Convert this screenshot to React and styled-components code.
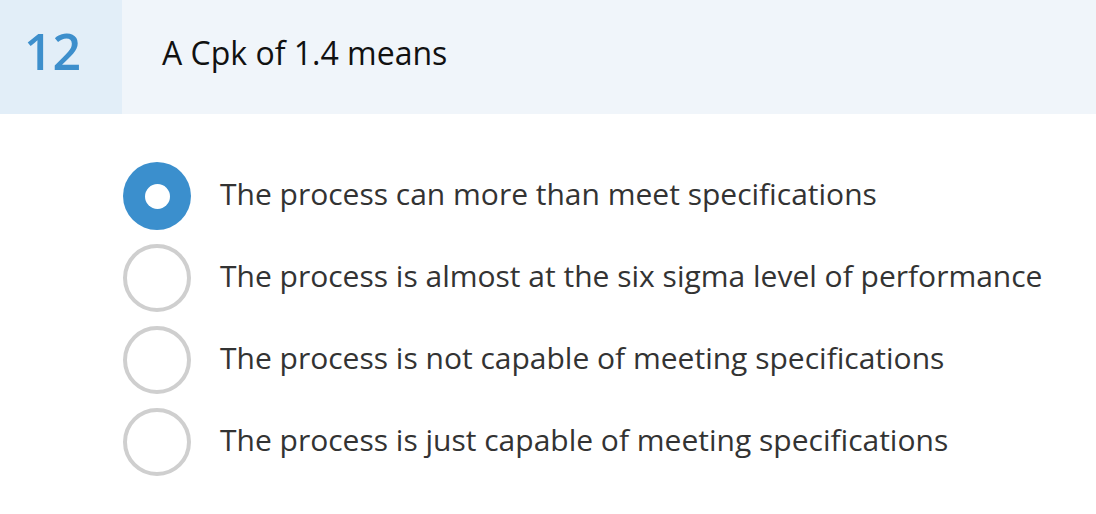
import React from "react";
import styled, { createGlobalStyle } from "styled-components";

const Global = createGlobalStyle`
  html, body { margin: 0; padding: 0; background: #ffffff; }
  body { font-family: "Open Sans", "Liberation Sans", sans-serif; }
`;

const Page = styled.div`
  width: 1096px;
  height: 514px;
  background: #fff;
`;

const Header = styled.div`
  display: flex;
  height: 114px;
  background: #f0f5fa;
`;

const Number = styled.div`
  width: 122px;
  flex: none;
  background: #e2eef8;
  color: #3d8fcc;
  font-size: 50px;
  font-weight: 600;
  display: flex;
  align-items: center;
  padding: 0 0 12px 24px;
  box-sizing: border-box;
`;

const Title = styled.div`
  display: flex;
  align-items: center;
  padding-left: 40px;
  padding-bottom: 10px;
  font-size: 32px;
  color: #111;
`;

const Options = styled.div`
  display: flex;
  flex-direction: column;
  gap: 14px;
  padding: 48px 0 0 123px;
`;

const Option = styled.label`
  display: flex;
  align-items: center;
  gap: 29px;
  cursor: pointer;
`;

const Radio = styled.span`
  width: 68px;
  height: 68px;
  border-radius: 50%;
  box-sizing: border-box;
  flex: none;
  display: flex;
  align-items: center;
  justify-content: center;
  background: ${(p) => (p.$checked ? "#3b8fcd" : "#fff")};
  border: ${(p) => (p.$checked ? "none" : "4px solid #cfcfcf")};
  &::after {
    content: "";
    display: ${(p) => (p.$checked ? "block" : "none")};
    width: 25px;
    height: 25px;
    border-radius: 50%;
    background: #fff;
  }
`;

const Label = styled.span`
  font-size: 30px;
  color: #333;
  padding-bottom: 6px;
`;

const options = [
  "The process can more than meet specifications",
  "The process is almost at the six sigma level of performance",
  "The process is not capable of meeting specifications",
  "The process is just capable of meeting specifications",
];

export default function App() {
  return (
    <Page>
      <Global />
      <Header>
        <Number>12</Number>
        <Title>A Cpk of 1.4 means</Title>
      </Header>
      <Options>
        {options.map((o, i) => (
          <Option key={i}>
            <Radio $checked={i === 0} />
            <Label>{o}</Label>
          </Option>
        ))}
      </Options>
    </Page>
  );
}
